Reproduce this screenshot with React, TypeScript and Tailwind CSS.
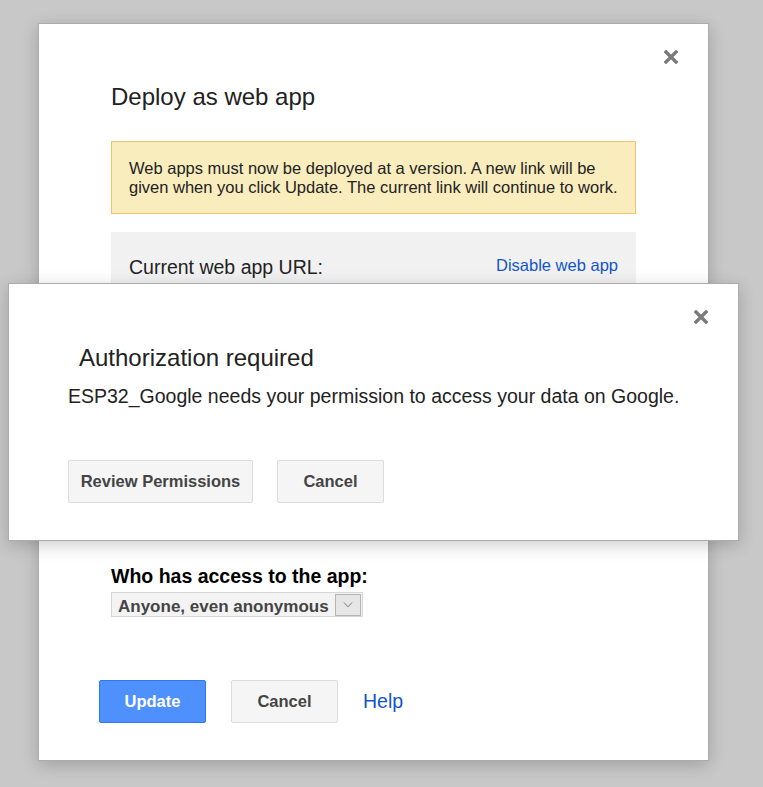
import React from "react";

function CloseIcon() {
  return (
    <svg width="14" height="14" viewBox="0 0 14 14" aria-hidden="true">
      <path d="M2 2L12 12M12 2L2 12" stroke="#7b7b7b" strokeWidth="3.4" strokeLinecap="square" />
    </svg>
  );
}

function GrayButton({ label, width }: { label: string; width: string }) {
  return (
    <button
      className={`${width} h-[43px] rounded-[2px] border border-[#dcdcdc] bg-[#f5f5f5] text-[16.5px] leading-[41px] font-bold text-[#444]`}
    >
      {label}
    </button>
  );
}

export default function App() {
  return (
    <div className="relative min-h-screen w-full overflow-hidden bg-[#c8c8c8] pt-[23px] font-['Liberation_Sans',Arial,sans-serif]">
      {/* deploy dialog */}
      <div className="ml-[38px] flex h-[738px] w-[671px] flex-col border border-[#acacac] bg-white pt-[26px] pr-[30px] shadow-[0_4px_16px_rgba(0,0,0,0.2)]">
        <div className="flex justify-end">
          <CloseIcon />
        </div>
        <div className="mt-[18px] pl-[72px] pr-[42px]">
          <h2 className="text-[24px] leading-[30px] font-normal text-[#222]">Deploy as web app</h2>

          <div className="mt-[29px] border border-[#f0c36d] bg-[#f9edbe] pt-[17px] pb-[16px] pl-[17px] pr-[17px] text-[16.5px] leading-[19px] text-[#222]">
            Web apps must now be deployed at a version. A new link will be given when you click Update. The current
            link will continue to work.
          </div>

          <div className="mt-[18px] h-[230px] bg-[#f1f1f1] pt-[24px] pl-[18px] pr-[18px]">
            <div className="flex items-start justify-between">
              <span className="text-[19.5px] leading-[22px] text-[#222]">Current web app URL:</span>
              <a className="text-[16.5px] leading-[19px] text-[#15c]">Disable web app</a>
            </div>
          </div>

          <div className="mt-[103px] text-[19.5px] leading-[22px] font-bold text-black">Who has access to the app:</div>
          <div className="mt-[5px] flex h-[25px] w-[252px] items-start border border-[#d6d6d6] bg-[#f3f3f3] pl-[6px] pr-[1px] pt-[1px]">
            <span className="mt-[3px] text-[17px] leading-[19px] font-bold text-[#444]">Anyone, even anonymous</span>
            <span className="ml-auto flex h-[22px] w-[26px] items-center justify-center border border-[#b4b4b4] bg-[#e6e6e6]">
              <svg width="10" height="6" viewBox="0 0 10 6" aria-hidden="true">
                <path d="M1 0.5L5 4.8L9 0.5" fill="none" stroke="#777" strokeWidth="1" />
              </svg>
            </span>
          </div>

          <div className="-ml-[12px] mt-[63px] flex items-center gap-[25px]">
            <button className="h-[43px] w-[107px] rounded-[2px] border border-[#3079ed] bg-[#4d90fe] text-[16.5px] leading-[41px] font-bold text-white">
              Update
            </button>
            <GrayButton label="Cancel" width="w-[107px]" />
            <a className="text-[19.5px] leading-[43px] text-[#15c]">Help</a>
          </div>
        </div>
      </div>

      {/* authorization dialog on top */}
      <div className="absolute left-[8px] top-[283px] flex h-[258px] w-[731px] flex-col border border-[#acacac] bg-white pt-[26px] pr-[30px] shadow-[0_4px_16px_rgba(0,0,0,0.2)]">
        <div className="flex justify-end">
          <CloseIcon />
        </div>
        <div className="pl-[59px]">
          <h2 className="mt-[19px] pl-[11px] text-[24px] leading-[30px] font-normal text-[#222]">Authorization required</h2>
          <p className="mt-[12px] text-[19.5px] leading-[22px] text-[#222]">
            ESP32_Google needs your permission to access your data on Google.
          </p>
          <div className="mt-[53px] flex gap-[24px]">
            <GrayButton label="Review Permissions" width="w-[185px]" />
            <GrayButton label="Cancel" width="w-[107px]" />
          </div>
        </div>
      </div>
    </div>
  );
}
